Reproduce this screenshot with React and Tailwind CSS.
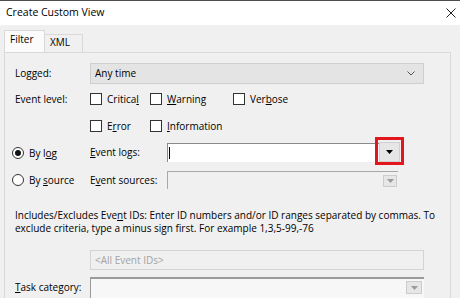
import React from "react";

const font = { fontFamily: '"Segoe UI", "Open Sans", sans-serif' };

function Check({ children, className = "" }) {
  return (
    <div className={"flex items-center gap-[5px] " + className}>
      <div className="w-[12px] h-[12px] border border-[#333333] bg-[#ffffff]" />
      <span className="leading-none">{children}</span>
    </div>
  );
}

function Radio({ checked, children }) {
  return (
    <div className="flex items-center gap-[5px] w-[85px] pl-[7px]">
      <div className="w-[12px] h-[12px] rounded-full border border-[#333333] bg-white flex items-center justify-center">
        {checked && <div className="w-[6px] h-[6px] rounded-full bg-[#111111]" />}
      </div>
      <span className="leading-none">{children}</span>
    </div>
  );
}

function Tri({ color = "#000000" }) {
  return (
    <svg width="7" height="4" viewBox="0 0 7 4">
      <polygon points="0,0 7,0 3.5,4" fill={color} />
    </svg>
  );
}

export default function App() {
  return (
    <div
      className="w-[460px] h-[298px] overflow-hidden bg-[#f0f0f0] text-[10px] text-black border-t border-[#4d4d4d] flex flex-col"
      style={font}
    >
      {/* Title bar */}
      <div className="h-[24px] bg-white flex items-center justify-between pl-[6px] pr-[3px] shrink-0">
        <span className="text-[10.5px]">Create Custom View</span>
        <svg width="10" height="10" viewBox="0 0 10 10" className="mr-[1px]">
          <path d="M0.5 0.5 L9.5 9.5 M9.5 0.5 L0.5 9.5" stroke="#222" strokeWidth="1" />
        </svg>
      </div>

      {/* Tabs */}
      <div className="flex items-end pl-[4px] pt-[5px] shrink-0">
        <div className="w-[41px] h-[22px] bg-[#fbfbfb] border border-b-0 border-[#d9d9d9] pl-[5px] pt-[3px] leading-none">
          Filter
        </div>
        <div className="w-[38px] h-[18px] border border-l-0 border-b-0 border-[#d9d9d9] pl-[5px] pt-[2px] leading-none">
          XML
        </div>
      </div>

      {/* Panel */}
      <div className="ml-[4px] w-[447px] flex-1 border border-[#d9d9d9] flex flex-col">
        {/* Logged */}
        <div className="flex items-center h-[21px] mt-[10px]">
          <div className="w-[85px] pl-[10px]">Logged:</div>
          <div className="w-[334px] h-[21px] bg-[#e4e4e4] border border-[#cfcfcf] flex items-center justify-between pl-[4px] pr-[8px]">
            <span>Any time</span>
            <svg width="8" height="5" viewBox="0 0 8 5">
              <path d="M0.5 0.5 L4 4 L7.5 0.5" stroke="#555" strokeWidth="1" fill="none" />
            </svg>
          </div>
        </div>

        {/* Event level */}
        <div className="flex items-center h-[12px] mt-[9px]">
          <div className="w-[85px] pl-[10px]">Event level:</div>
          <Check className="w-[60px]">
            Critica<u>l</u>
          </Check>
          <Check className="w-[83px]">
            <u>W</u>arning
          </Check>
          <Check>
            Ver<u>b</u>ose
          </Check>
        </div>

        <div className="flex items-center h-[12px] mt-[15px]">
          <div className="w-[85px]" />
          <Check className="w-[60px]">
            E<u>r</u>ror
          </Check>
          <Check>
            <u>I</u>nformation
          </Check>
        </div>

        {/* By log */}
        <div className="flex items-center h-[19px] mt-[11px]">
          <Radio checked>
            By l<u>o</u>g
          </Radio>
          <div className="w-[77px]">
            <u>E</u>vent logs:
          </div>
          <div className="relative w-[233px] h-[19px] bg-white border-t border-l border-[#8a8a8a] flex items-center">
            <div className="ml-[1px] w-[1px] h-[12px] bg-black" />
            <div className="absolute right-[0px] top-[-2px] w-[21px] h-[20px] bg-[#e6e6e6] border border-[#d0d0d0] flex items-center justify-center">
              <Tri />
            </div>
            <div className="absolute right-[-4px] top-[-7px] w-[29px] h-[28px] border-[3px] border-[#e3161e]" />
          </div>
        </div>

        {/* By source */}
        <div className="flex items-center h-[18px] mt-[9px]">
          <Radio>
            By <u>s</u>ource
          </Radio>
          <div className="w-[77px]">
            E<u>v</u>ent sources:
          </div>
          <div className="relative w-[231px] h-[18px] bg-[#f0f0f0] border-t border-l border-[#a8a8a8] flex items-center justify-end pr-[1px]">
            <div className="w-[14px] h-[12px] bg-[#e6e6e6] border border-[#cccccc] flex items-center justify-center">
              <Tri color="#9a9a9a" />
            </div>
          </div>
        </div>

        {/* Paragraph */}
        <div className="mt-[20px] pl-[10px] leading-[13px] whitespace-nowrap">
          <div>
            Includes/Excludes Eve<u>n</u>t IDs: Enter ID numbers and/or ID ranges separated by commas. To
          </div>
          <div>exclude criteria, type a minus sign first. For example 1,3,5-99,-76</div>
        </div>

        {/* All event IDs */}
        <div className="flex mt-[15px]">
          <div className="w-[85px]" />
          <div className="w-[334px] h-[20px] border border-[#d4d4d4] bg-[#f0f0f0] flex items-center pl-[4px] text-[#a3a3a3]">
            &lt;All Event IDs&gt;
          </div>
        </div>

        {/* Task category */}
        <div className="flex items-start mt-[7px]">
          <div className="w-[85px] pl-[10px] pt-[3px]">
            <u>T</u>ask category:
          </div>
          <div className="w-[334px] h-[24px] border-t-2 border-l border-[#9a9a9a] bg-[#f7f7f7] flex justify-end pr-[2px] pt-[2px]">
            <div className="w-[16px] h-[13px] bg-[#e6e6e6] border border-[#cccccc] flex items-center justify-center">
              <Tri color="#9a9a9a" />
            </div>
          </div>
        </div>
      </div>
    </div>
  );
}
